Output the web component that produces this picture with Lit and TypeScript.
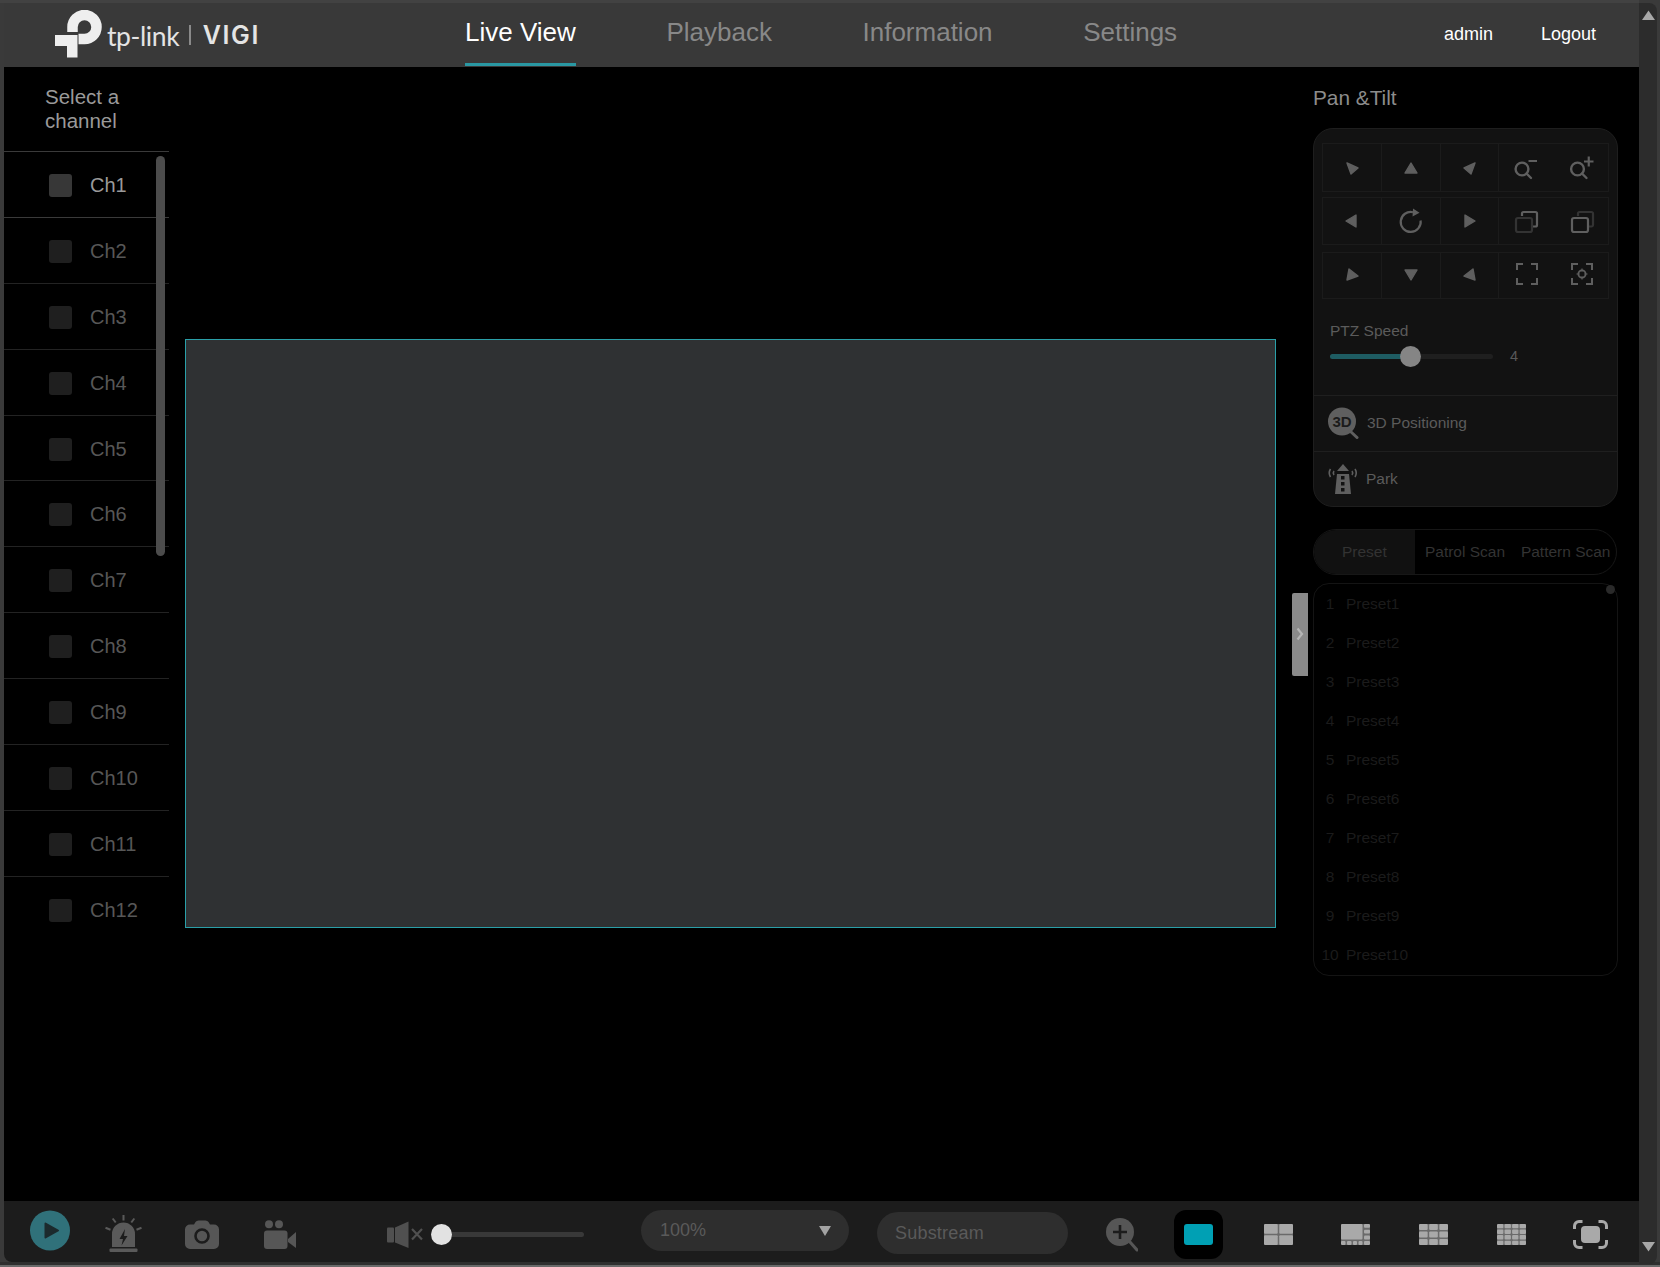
import { LitElement, html, css, svg } from "lit";
import { customElement } from "lit/decorators.js";

const tri = (pts: string) => html`<svg width="24" height="24" viewBox="0 0 24 24"><polygon points=${pts} fill="#5f5f5f" stroke="#5f5f5f" stroke-width="1.4" stroke-linejoin="round"/></svg>`;

const ptzIcons = {
  zoomOut: html`<svg width="28" height="28" viewBox="0 0 28 28" fill="none" stroke="#5f5f5f" stroke-width="2.4"><circle cx="9" cy="15" r="6.4"/><path d="M13.5 19.5 18 24" stroke-linecap="round"/><path d="M15.500 7h8.500" stroke-width="2"/></svg>`,
  zoomIn: html`<svg width="28" height="28" viewBox="0 0 28 28" fill="none" stroke="#5f5f5f" stroke-width="2.4"><circle cx="9.500" cy="15" r="6.400"/><path d="M14 19.500 18.500 24" stroke-linecap="round"/><path d="M16 7.500h9.500M20.750 2.500v10" stroke-width="2.200"/></svg>`,
  rotate: html`<svg width="28" height="28" viewBox="0 0 28 28" fill="none" stroke="#5f5f5f" stroke-width="2.2"><path d="M23.600 13.500A10 10 0 1 1 16 5.200"/><polygon points="16,1.500 22.500,5.800 15.500,9.500" fill="#5f5f5f" stroke="none"/></svg>`,
  stackBack: html`<svg width="28" height="28" viewBox="0 0 28 28" fill="none" stroke-width="2.2"><path d="M9 9V6.500A1.500 1.500 0 0 1 10.500 5H22.500A1.500 1.500 0 0 1 24 6.500V18A1.500 1.500 0 0 1 22.500 19.500H20" stroke="#5f5f5f"/><rect x="3" y="11" width="16" height="14" rx="2" stroke="#333"/></svg>`,
  stackFront: html`<svg width="28" height="28" viewBox="0 0 28 28" fill="none" stroke-width="2.2"><path d="M10 9V6.500A1.500 1.500 0 0 1 11.500 5H23.500A1.500 1.500 0 0 1 25 6.500V18A1.500 1.500 0 0 1 23.500 19.500H21" stroke="#333"/><rect x="4" y="11" width="16" height="14" rx="2" stroke="#5f5f5f"/></svg>`,
  focus: html`<svg width="28" height="28" viewBox="0 0 28 28" fill="none" stroke="#5f5f5f" stroke-width="2"><path d="M4 8V2h6M18 2h6v6M24 16v6h-6M10 22H4v-6"/></svg>`,
  focusTarget: html`<svg width="28" height="28" viewBox="0 0 28 28" fill="none" stroke="#5f5f5f" stroke-width="2"><path d="M4 8V2h6M18 2h6v6M24 16v6h-6M10 22H4v-6"/><circle cx="14" cy="12" r="3.600" stroke-width="1.800"/><path d="M14 6.500v3M14 14.500v3M8.500 12h3M16.500 12h3" stroke-width="1.200"/></svg>`,
};

const ptzRows = [
  { cls: "r1", cells: [tri("7,7 18,12 11,18"), tri("12,7 18,17 6,17"), tri("17,7 6,12 13,18")], a: ptzIcons.zoomOut, b: ptzIcons.zoomIn },
  { cls: "r2", cells: [tri("16,6 16,18 6,12"), ptzIcons.rotate, tri("7,6 7,18 17,12")], a: ptzIcons.stackBack, b: ptzIcons.stackFront },
  { cls: "r3", cells: [tri("9,5 18,12 7,16"), tri("6,6 18,6 12,16"), tri("15,5 6,12 17,16")], a: ptzIcons.focus, b: ptzIcons.focusTarget },
];

const gridIcon = (cells: [number, number, number, number][], fill = "#a9a9a9") =>
  html`<svg width="29" height="21" viewBox="0 0 29 21"><rect width="29" height="21" rx="3" fill="#6a6a6a"/>${cells.map(([x, y, w, h]) => svg`<rect x=${x} y=${y} width=${w} height=${h} rx="1" fill=${fill}/>`)}</svg>`;

const evenGrid = (n: number) => {
  const gap = n > 3 ? 1.2 : 1.5;
  const w = (29 - gap * (n - 1)) / n;
  const h = (21 - gap * (n - 1)) / n;
  const out: [number, number, number, number][] = [];
  for (let r = 0; r < n; r++) for (let c = 0; c < n; c++) out.push([c * (w + gap), r * (h + gap), w, h]);
  return out;
};

const bigGrid: [number, number, number, number][] = [
  [0, 0, 21.5, 15.5],
  [23, 0, 6, 3.8], [23, 5.7, 6, 3.8], [23, 11.4, 6, 4.1],
  [0, 17, 4.5, 4], [6, 17, 4.5, 4], [12, 17, 4, 4], [17.5, 17, 4, 4], [23, 17, 6, 4],
];

const channels = Array.from({ length: 12 }, (_, i) => `Ch${i + 1}`);
const presets = Array.from({ length: 10 }, (_, i) => i + 1);

@customElement("app-root")
export class AppRoot extends LitElement {
  static styles = css`
    :host {
      display: block;
      width: 1660px;
      height: 1267px;
      overflow: hidden;
      background: #3a3a3a;
      font-family: "Liberation Sans", Arial, sans-serif;
    }
    .frame { display: flex; height: 100%; }
    .page { width: 1639px; display: flex; flex-direction: column; padding-left: 4px; box-sizing: border-box; }
    .pagebar {
      width: 18px; margin-top: 3px; height: 1261px; background: #2c2c2c; border-radius: 0 8px 8px 0;
      display: flex; flex-direction: column; justify-content: space-between; align-items: center; padding: 7px 0 12px; box-sizing: border-box;
    }
    .topline { height: 3px; margin-left: -4px; background: #424242; flex: none; }
    header {
      height: 64px; flex: none; display: flex; align-items: stretch; background: #393939;
    }
    .logo { width: 461px; padding-left: 51px; box-sizing: border-box; display: flex; align-items: center; color: #e4e4e4; margin-top: -3px; }
    .logo svg { flex: none; display: block; }
    .tp { font-family: "Lato", sans-serif; font-size: 26.5px; font-weight: 400; margin-left: 5px; letter-spacing: -0.4px; position: relative; top: 2px; }
    .sep { width: 1.5px; height: 20px; background: #8a8a8a; margin: 3px 12px 0 10px; }
    .vigi { font-family: "Inter", sans-serif; font-weight: 600; font-size: 25px; letter-spacing: 1.6px; margin-top: 3px; }
    nav { display: flex; gap: 90.6px; flex: none; }
    nav a {
      font-size: 26px; color: #888; height: 64px; box-sizing: border-box; padding-top: 11px; line-height: 36px; letter-spacing: 0;
    }
    nav a.on { color: #fff; border-bottom: 3px solid #2a98a3; height: 63px; }
    .user { margin-left: auto; display: flex; color: #fff; font-size: 18px; gap: 48px; padding: 20px 43px 0 0; line-height: 22px; }

    main { height: 1134px; flex: none; background: #000; display: flex; }

    .channels { width: 165px; flex: none; }
    .ch-title { height: 85px; box-sizing: border-box; padding: 18px 0 0 41px; font-size: 20.5px; line-height: 24px; color: #9a9a9a; border-bottom: 1px solid #3a3a3a; }
    .ch-list { position: relative; }
    .ch-thumb { position: absolute; left: 152px; top: 4px; width: 9px; height: 400px; border-radius: 5px; background: #4c4c4c; }
    .ch {
      height: 65.9px; box-sizing: border-box; display: flex; align-items: center; padding: 2px 0 0 45px; gap: 18px;
      border-bottom: 1px solid #232323; color: #575757; font-size: 20px;
    }
    .ch:last-child { border-bottom: none; }
    .ch .box { width: 23px; height: 23px; border-radius: 3px; background: #1f1f1f; }
    .ch.on { border-bottom-color: #3a3a3a; color: #9a9a9a; }
    .ch.on .box { background: #373737; }

    .stage { flex: none; display: flex; align-items: center; margin-left: 16px; }
    .video { width: 1091px; height: 589px; margin-bottom: 1px; box-sizing: border-box; background: #2f3133; border: 1px solid #2a9fa8; }
    .handle {
      width: 16px; height: 83px; margin: 0 5px 0 16px; background: #8a8a8a; border-radius: 2px 0 0 2px;
      display: flex; align-items: center; justify-content: center;
    }

    .right { width: 305px; flex: none; }
    .right h2 { margin: 0; height: 61px; box-sizing: border-box; padding-top: 20px; line-height: 22px; font-size: 20.8px; font-weight: 400; color: #8c8c8c; }
    .card { height: 379px; box-sizing: border-box; background: #121212; border: 1px solid #1e1e1e; border-radius: 20px; display: flex; flex-direction: column; }
    .ptz { margin: 14px 8px 0; width: 287px; display: flex; flex-direction: column; }
    .ptz-row { display: grid; grid-template-columns: 59px 59px 58px 111px; border: 1px solid #1b1b1b; box-sizing: border-box; }
    .ptz-row.r1 { height: 49px; }
    .ptz-row.r2 { height: 48px; margin-top: 5px; }
    .ptz-row.r3 { height: 47px; margin-top: 7px; }
    .cell { display: flex; align-items: center; justify-content: center; border-right: 1px solid #1b1b1b; }
    .pair { display: flex; align-items: center; justify-content: space-around; }
    .speed { height: 97px; box-sizing: border-box; padding: 22px 0 0 16px; border-bottom: 1px solid #1f1f1f; flex: none; }
    .speed .lbl { font-size: 15.5px; line-height: 20px; color: #5b5b5b; }
    .slider { display: flex; align-items: center; margin-top: 4px; height: 22px; }
    .s-track { position: relative; width: 163px; height: 5px; border-radius: 3px; background: #1f1f1f; }
    .s-fill { height: 100%; width: 81px; border-radius: 3px; background: #1e5c62; }
    .s-thumb { position: absolute; left: 70px; top: -8px; width: 21px; height: 21px; border-radius: 50%; background: #858585; }
    .s-val { font-size: 14.5px; color: #595959; margin-left: 17px; }
    .opt { display: flex; align-items: center; font-size: 15.5px; color: #5b5b5b; flex: 1; padding-left: 13px; }
    .opt + .opt { border-top: 1px solid #1f1f1f; }
    .opt svg { flex: none; }
    .opt .t3d { margin-left: 8px; }
    .opt .tpark { margin-left: 7px; }
    .tabs { margin-top: 22px; height: 46px; box-sizing: border-box; border: 1px solid #171717; border-radius: 23px; overflow: hidden; display: flex; width: 304px; }
    .tab { flex: 1; display: flex; align-items: center; justify-content: center; font-size: 15.5px; color: #333; white-space: nowrap; }
    .tab.on { background: #111; }
    .presets { position: relative; margin-top: 8px; height: 393px; box-sizing: border-box; border: 1px solid #141414; border-radius: 16px; }
    .dot { position: absolute; right: 2px; top: 1px; width: 9px; height: 9px; border-radius: 50%; background: #2a2a2a; }
    .preset { height: 39px; display: flex; align-items: center; font-size: 15.5px; color: #1b1b1b; }
    .preset .n { width: 18px; margin-left: 7px; text-align: center; flex: none; }
    .preset .p { margin-left: 7px; }

    .bar {
      height: 61px; flex: none; background: #1c1c1c; border-radius: 0 0 0 8px; display: flex; align-items: center; position: relative;
    }
    .i { flex: none; display: block; }
    span.i svg { display: block; }
    .play { margin-left: 26px; margin-top: -2px; }
    .alarm { margin-left: 35px; margin-top: 4px; }
    .camera { margin-left: 43px; margin-top: 6px; }
    .rec { margin-left: 45px; margin-top: 6px; }
    .spk { margin-left: 91px; margin-top: 6px; }
    .vol { position: relative; width: 143px; height: 5px; background: #383838; border-radius: 3px; margin: 6px 0 0 18px; flex: none; }
    .vol i { position: absolute; left: -10.5px; top: -8px; width: 21px; height: 21px; border-radius: 50%; background: #e2e2e2; }
    .pill { background: #2e2e2e; border-radius: 21px; box-sizing: border-box; flex: none; color: #5a5a5a; font-size: 18px; display: flex; align-items: center; }
    .sel { width: 208px; height: 41px; margin: -2px 0 0 57px; padding: 0 18px 0 19px; justify-content: space-between; }
    .sub { width: 191px; height: 42px; margin: 3px 0 0 28px; padding-left: 18px; letter-spacing: 0.2px; }
    .zoomp { margin-left: 38px; margin-top: 6px; }
    .layout-on { margin-left: 36px; width: 49px; height: 49px; background: #000; border-radius: 12px; display: flex; align-items: center; justify-content: center; flex: none; margin-top: 6px; }
    .l1 { margin-left: 41px; margin-top: 6px; }
    .ln { margin-left: 48px; margin-top: 6px; }
    .ln2 { margin-left: 49px; }
    .full { margin-left: 47px; margin-top: 6px; }
    .foot { height: 5px; flex: none; margin-left: -4px; width: 1660px; background: linear-gradient(#2f2f2f 0 3px, #6a6a6a 3px); }
  `;

  render() {
    return html`
      <div class="frame">
        <div class="page">
          <div class="topline"></div>
          <header>
            <div class="logo">
              <svg width="47" height="48" viewBox="0 0 47 48" fill="#eee">
                <path d="M17.5 22V17A12 12 0 1 1 29.5 29H23.5" fill="none" stroke="#eee" stroke-width="10.5"/>
                <path d="M0 25H22.500V47.500H12V36H0Z"/>
              </svg>
              <span class="tp">tp-link</span>
              <span class="sep"></span>
              <span class="vigi">VIGI</span>
            </div>
            <nav>
              <a class="on">Live View</a>
              <a>Playback</a>
              <a>Information</a>
              <a>Settings</a>
            </nav>
            <div class="user"><span>admin</span><span>Logout</span></div>
          </header>
          <main>
            <section class="channels">
              <div class="ch-title">Select a<br />channel</div>
              <div class="ch-list">
                <div class="ch-thumb"></div>
                ${channels.map((c, i) => html`<div class="ch ${i === 0 ? "on" : ""}"><span class="box"></span><span>${c}</span></div>`)}
              </div>
            </section>
            <section class="stage">
              <div class="video"></div>
              <div class="handle">
                <svg width="8" height="14" viewBox="0 0 8 14"><path d="M1.500 1.500 6 7 1.500 12.500" fill="none" stroke="#b5b5b5" stroke-width="2.200"/></svg>
              </div>
            </section>
            <aside class="right">
              <h2>Pan &amp;Tilt</h2>
              <div class="card">
                <div class="ptz">
                  ${ptzRows.map(
                    (r) => html`<div class="ptz-row ${r.cls}">
                      ${r.cells.map((c) => html`<div class="cell">${c}</div>`)}
                      <div class="pair">${r.a}${r.b}</div>
                    </div>`,
                  )}
                </div>
                <div class="speed">
                  <div class="lbl">PTZ Speed</div>
                  <div class="slider">
                    <div class="s-track"><div class="s-fill"></div><div class="s-thumb"></div></div>
                    <span class="s-val">4</span>
                  </div>
                </div>
                <div class="opt">
                  <svg width="32" height="32" viewBox="0 0 32 32">
                    <circle cx="15" cy="14.500" r="14" fill="#5f5f5f"/>
                    <path d="M23 24 30 30.500" stroke="#5f5f5f" stroke-width="3" stroke-linecap="round"/>
                    <text x="15" y="20" text-anchor="middle" font-family="Liberation Sans, sans-serif" font-weight="700" font-size="15" fill="#1b1b1b">3D</text>
                  </svg>
                  <span class="t3d">3D Positioning</span>
                </div>
                <div class="opt">
                  <svg width="32" height="32" viewBox="0 0 32 32" fill="#5f5f5f">
                    <path d="M10 11h12l2 20H8z" />
                    <path d="M16 1l6 7H10z" />
                    <rect x="14" y="13" width="3.500" height="3.500" fill="#121212"/>
                    <rect x="14" y="19" width="3.500" height="3.500" fill="#121212"/>
                    <rect x="14" y="25" width="3.500" height="3.500" fill="#121212"/>
                    <path d="M3.500 6Q1 10 3.500 14M7 8Q5.500 10 7 12M28 6Q30.500 10 28 14M25 8Q26.500 10 25 12" fill="none" stroke="#5f5f5f" stroke-width="1.600"/>
                  </svg>
                  <span class="tpark">Park</span>
                </div>
              </div>
              <div class="tabs">
                <div class="tab on">Preset</div>
                <div class="tab">Patrol Scan</div>
                <div class="tab">Pattern Scan</div>
              </div>
              <div class="presets">
                ${presets.map((n) => html`<div class="preset"><span class="n">${n}</span><span class="p">Preset${n}</span></div>`)}
                <div class="dot"></div>
              </div>
            </aside>
          </main>
          <div class="bar">
            <svg class="i play" width="40" height="41" viewBox="0 0 40 41">
              <circle cx="20" cy="20.500" r="20" fill="#30717a"/>
              <path d="M15.500 13.500 28 20.500 15.500 27.500Z" fill="#1c2a2d" stroke="#1c2a2d" stroke-width="2" stroke-linejoin="round"/>
            </svg>
            <svg class="i alarm" width="37" height="38" viewBox="0 0 37 38" fill="#5a5a5a">
              <path d="M7 32V19A11.500 11.500 0 0 1 30 19V32Z"/>
              <rect x="4.500" y="33.500" width="28" height="3.500" rx="1"/>
              <path d="M18.500 0v5.500M7.700 3.500l3 4M29.300 3.500l-3 4M0.500 12.700l5 2M36.500 12.700l-5 2" stroke="#5a5a5a" stroke-width="2" fill="none"/>
              <path d="M20 14 14.500 24H18L16.500 30.500 22.500 21H19Z" fill="#1c1c1c"/>
            </svg>
            <svg class="i camera" width="34" height="29" viewBox="0 0 34 29">
              <path d="M5 4.500h4L10.500 2Q11.500.5 13.500.5h7Q22.500.5 23.500 2L25 4.500h4a5 5 0 0 1 5 5V24a5 5 0 0 1-5 5H5a5 5 0 0 1-5-5V9.500a5 5 0 0 1 5-5Z" fill="#565656"/>
              <circle cx="17" cy="16" r="6.500" fill="none" stroke="#1c1c1c" stroke-width="2.600"/>
            </svg>
            <svg class="i rec" width="32" height="29" viewBox="0 0 32 29" fill="#565656">
              <circle cx="5" cy="4.200" r="4"/>
              <circle cx="15" cy="4.200" r="4"/>
              <rect x="0" y="10.500" width="23.500" height="18.500" rx="3"/>
              <path d="M24 19 32 12V28L24 22Z"/>
            </svg>
            <svg class="i spk" width="36" height="28" viewBox="0 0 36 28" fill="#505050">
              <rect x="0" y="6.500" width="7" height="15" rx="1"/>
              <path d="M8 6.500 21.500 .5V27L8 21.500Z"/>
              <path d="M25 8 35 18.500M35 8 25 18.500" stroke="#505050" stroke-width="2.200" fill="none"/>
            </svg>
            <div class="vol"><i></i></div>
            <div class="pill sel">
              <span>100%</span>
              <svg width="12" height="10" viewBox="0 0 12 10"><path d="M0 0H12L6 10Z" fill="#a3a3a3"/></svg>
            </div>
            <div class="pill sub">Substream</div>
            <svg class="i zoomp" width="32" height="34" viewBox="0 0 32 34">
              <circle cx="14" cy="14" r="14" fill="#565656"/>
              <path d="M14 7v14M7 14h14" stroke="#1c1c1c" stroke-width="2.600"/>
              <path d="M24 24 31 32" stroke="#565656" stroke-width="3" stroke-linecap="round"/>
            </svg>
            <div class="layout-on">
              <svg width="29" height="21" viewBox="0 0 29 21"><rect width="29" height="21" rx="3" fill="#00a0b4"/></svg>
            </div>
            <span class="i l1">${gridIcon(evenGrid(2))}</span>
            <span class="i ln">${gridIcon(bigGrid)}</span>
            <span class="i ln ln2">${gridIcon(evenGrid(3))}</span>
            <span class="i ln ln2">${gridIcon(evenGrid(4))}</span>
            <svg class="i full" width="35" height="29" viewBox="0 0 35 29">
              <path d="M1.500 9V6A4.500 4.500 0 0 1 6 1.500h3.500M25.500 1.500H29A4.500 4.500 0 0 1 33.500 6V9M33.500 20v3A4.500 4.500 0 0 1 29 27.500h-3.500M9.500 27.500H6A4.500 4.500 0 0 1 1.500 23v-3" fill="none" stroke="#a9a9a9" stroke-width="3"/>
              <rect x="8" y="6" width="19" height="17" rx="4" fill="#a9a9a9"/>
            </svg>
          </div>
          <div class="foot"></div>
        </div>
        <div class="pagebar">
          <svg width="13" height="10" viewBox="0 0 13 10"><path d="M6.500 0.500 13 10H0Z" fill="#a8a8a8"/></svg>
          <svg width="13" height="10" viewBox="0 0 13 10"><path d="M0 0H13L6.500 9.500Z" fill="#a8a8a8"/></svg>
        </div>
      </div>
    `;
  }
}
